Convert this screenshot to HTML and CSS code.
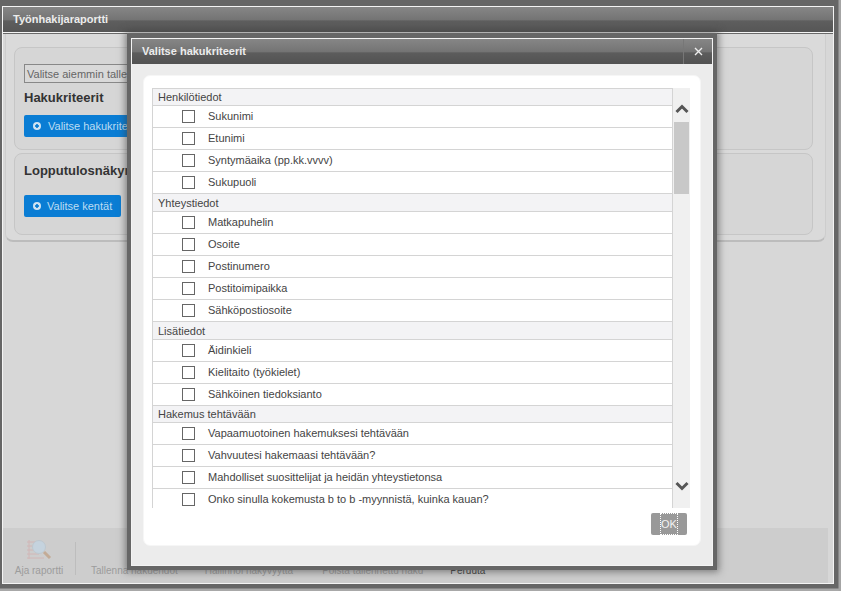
FILE: index.html
```html
<!DOCTYPE html>
<html lang="fi">
<head>
    <meta charset="UTF-8">
    <meta name="viewport" content="width=device-width, initial-scale=1.0">
    <title>Työnhakijaraportti</title>
    <link rel="stylesheet" href="styles.css">
</head>
<body>

<div class="window">
    <div class="title-bar">Työnhakijaraportti</div>
    <div class="page">
        <div class="panel">
            <div class="box box-criteria">
                <div class="saved-search">Valitse aiemmin tallennettu haku</div>
                <h3>Hakukriteerit</h3>
                <button type="button" class="blue-btn blue-btn-wide"><span class="plus-dot"></span>Valitse hakukriteerit</button>
            </div>
            <div class="box box-result">
                <h3>Lopputulosnäkymä</h3>
                <button type="button" class="blue-btn"><span class="plus-dot"></span>Valitse kentät</button>
            </div>
        </div>
    </div>
    <div class="toolbar">
        <div class="tool tool-run">
            <svg class="tool-icon" width="26" height="22" viewBox="0 0 26 22">
                <path d="M1 3h14M1 7h11M1 11h10M1 15h12M1 19h17M3 1v19" stroke="#d3b0b0" stroke-width="1" fill="none"/>
                <circle cx="13" cy="8" r="6.5" fill="#c3d6e4" stroke="#b9c6d0"/>
                <path d="M18 13l6 6" stroke="#c0a084" stroke-width="3"/>
            </svg>
            <span>Aja raportti</span>
        </div>
        <div class="tool-sep"></div>
        <span class="tool-link tool-save">Tallenna hakuehdot</span>
        <span class="tool-link tool-edit">Hallinnoi näkyvyyttä</span>
        <span class="tool-link tool-del">Poista tallennettu haku</span>
        <span class="tool-link tool-cancel">Peruuta</span>
    </div>
</div>

<div class="modal">
    <div class="modal-head">
        <span class="modal-title">Valitse hakukriteerit</span>
        <span class="modal-close">
            <svg width="9" height="9" viewBox="0 0 9 9"><path d="M1 1l7 7M8 1l-7 7" stroke="#eee" stroke-width="1.4"/></svg>
        </span>
    </div>
    <div class="modal-body">
        <div class="card">
            <div class="list-wrap">
                <div class="list">
                    <div class="group">Henkilötiedot</div>
                    <label class="row"><span class="check"></span>Sukunimi</label>
                    <label class="row"><span class="check"></span>Etunimi</label>
                    <label class="row"><span class="check"></span>Syntymäaika (pp.kk.vvvv)</label>
                    <label class="row"><span class="check"></span>Sukupuoli</label>
                    <div class="group group-tall">Yhteystiedot</div>
                    <label class="row"><span class="check"></span>Matkapuhelin</label>
                    <label class="row"><span class="check"></span>Osoite</label>
                    <label class="row"><span class="check"></span>Postinumero</label>
                    <label class="row"><span class="check"></span>Postitoimipaikka</label>
                    <label class="row"><span class="check"></span>Sähköpostiosoite</label>
                    <div class="group group-tall">Lisätiedot</div>
                    <label class="row"><span class="check"></span>Äidinkieli</label>
                    <label class="row"><span class="check"></span>Kielitaito (työkielet)</label>
                    <label class="row"><span class="check"></span>Sähköinen tiedoksianto</label>
                    <div class="group">Hakemus tehtävään</div>
                    <label class="row"><span class="check"></span>Vapaamuotoinen hakemuksesi tehtävään</label>
                    <label class="row"><span class="check"></span>Vahvuutesi hakemaasi tehtävään?</label>
                    <label class="row"><span class="check"></span>Mahdolliset suosittelijat ja heidän yhteystietonsa</label>
                    <label class="row row-last"><span class="check"></span>Onko sinulla kokemusta b to b -myynnistä, kuinka kauan?</label>
                </div>
                <div class="scrollbar">
                    <svg class="arrow" width="16" height="10" viewBox="0 0 16 10"><path d="M2.5 8L8 2.5 13.5 8" stroke="#555" stroke-width="3" fill="none"/></svg>
                    <div class="thumb"></div>
                    <div class="track"></div>
                    <svg class="arrow" width="16" height="10" viewBox="0 0 16 10"><path d="M2.5 2L8 7.5 13.5 2" stroke="#555" stroke-width="3" fill="none"/></svg>
                </div>
            </div>
            <div class="card-foot">
                <button type="button" class="ok-btn"><span class="ok-text">OK</span></button>
            </div>
        </div>
    </div>
</div>

</body>
</html>
```

FILE: styles.css
```css
html, body {
    margin: 0;
    height: 591px;
    overflow: hidden;
}
body {
    position: relative;
    font-family: "Liberation Sans", Arial, sans-serif;
    background: linear-gradient(to right, transparent 838px, #a4a4a4 839px), linear-gradient(#666 0, #666 588px, #a8a8a8 589px);
    box-sizing: border-box;
    padding: 6px 7px 0 2px;
}
.window {
    height: 578px;
    box-sizing: border-box;
    border: 1px solid #f4f4f4;
    background: #d7d7d7;
    display: flex;
    flex-direction: column;
}
.title-bar {
    height: 25px;
    line-height: 24px;
    padding-left: 10px;
    font-size: 11px;
    font-weight: bold;
    color: #ececec;
    background: linear-gradient(#868686, #747474 50%, #5e5e5e 56%, #565656);
    border-bottom: 1px solid #f4f4f4;
    flex: none;
}
.page {
    flex: 1;
    border-top: 1px solid #6a6a6a;
}
.panel {
    height: 208px;
    box-sizing: border-box;
    margin: 0 7px 0 2px;
    padding: 13px 12px 0 8px;
    background: #dadada;
    border: 1px solid #cdcdcd;
    border-top: 0;
    border-bottom: 2px solid #bcbcbc;
    border-radius: 0 0 8px 8px;
}
.box {
    border: 1px solid #c6c6c6;
    border-radius: 8px;
    background: #d6d6d6;
    padding: 0 9px;
    box-sizing: border-box;
}
.box-criteria {
    height: 103px;
    padding-top: 16px;
    margin-bottom: 3px;
}
.box-result {
    height: 82px;
    padding-top: 9px;
}
.saved-search {
    width: 300px;
    height: 19px;
    line-height: 18px;
    box-sizing: border-box;
    border: 1px solid #888;
    padding-left: 2px;
    font-size: 11px;
    color: #666;
    background: #d9d9d9;
}
.box h3 {
    margin: 0;
    font-size: 13px;
    line-height: 16px;
    color: #333;
}
.box-criteria h3 {
    margin: 7px 0 9px;
}
.box-result h3 {
    margin-bottom: 16px;
}
.blue-btn {
    display: flex;
    align-items: center;
    height: 22px;
    width: 97px;
    padding: 0 0 0 9px;
    border: 0;
    border-radius: 2px;
    background: #0a7dd4;
    color: #bcdcf2;
    font-family: inherit;
    font-size: 11px;
    white-space: nowrap;
}
.blue-btn-wide {
    width: 180px;
}
.plus-dot {
    width: 8px;
    height: 8px;
    margin-right: 6px;
    border-radius: 50%;
    background: radial-gradient(#0a7dd4 1.5px, #cfe3f2 2px);
    flex: none;
}
.blue-btn-wide .plus-dot {
    margin-right: 7px;
}
.toolbar {
    height: 55px;
    flex: none;
    background: #cdcdcd;
    margin: 0 5px 0 0;
    display: flex;
    align-items: flex-start;
    font-size: 10px;
    color: #9c9c9c;
    position: relative;
}
.tool {
    width: 72px;
    text-align: center;
    display: flex;
    flex-direction: column;
    align-items: center;
}
.tool-icon {
    margin-top: 11px;
    margin-bottom: 4px;
    opacity: 0.75;
}
.tool-sep {
    width: 1px;
    height: 33px;
    margin-top: 14px;
    background: #bdbdbd;
}
.tool-link {
    margin-top: 36px;
    white-space: nowrap;
    line-height: 13px;
}
.tool-save { margin-left: 15px; }
.tool-edit { margin-left: 27px; }
.tool-del { margin-left: 29px; }
.tool-cancel { margin-left: 27px; color: #444; }

/* dialog on top of the page */
.modal {
    position: absolute;
    left: 127px;
    top: 33px;
    width: 590px;
    height: 537px;
    box-sizing: border-box;
    border: 4px solid #666;
    border-top-width: 5px;
    box-shadow: 0 0 7px 2px rgba(60, 60, 60, 0.55);
    background: #ececec;
    display: flex;
    flex-direction: column;
}
.modal-head {
    height: 26px;
    box-sizing: border-box;
    border: 1px solid #f4f4f4;
    border-bottom: 0;
    background: linear-gradient(#868686, #747474 50%, #5c5c5c 56%, #525252);
    display: flex;
    flex: none;
}
.modal-title {
    flex: 1;
    padding-left: 10px;
    line-height: 24px;
    font-size: 11px;
    font-weight: bold;
    color: #ececec;
}
.modal-close {
    width: 28px;
    border-left: 1px solid #777;
    display: flex;
    align-items: center;
    justify-content: center;
}
.modal-body {
    flex: 1;
    min-height: 0;
    padding: 11px 11px 19px 11px;
    border-left: 1px solid #f4f4f4;
    border-right: 1px solid #f4f4f4;
    border-bottom: 1px solid #f4f4f4;
}
.card {
    height: 100%;
    box-sizing: border-box;
    background: #fff;
    border: 1px solid #f6f6f6;
    border-radius: 7px;
    padding: 12px 10px 0 8px;
}
.list-wrap {
    display: flex;
    height: 420px;
}
.list {
    width: 521px;
    height: 420px;
    box-sizing: border-box;
    border-left: 1px solid #d4d4d4;
    border-right: 1px solid #d4d4d4;
    border-top: 1px solid #d4d4d4;
    overflow: hidden;
}
.group {
    height: 16px;
    line-height: 16px;
    padding-left: 5px;
    font-size: 11px;
    color: #444;
    background: #f3f3f5;
    border-bottom: 1px solid #d4d4d4;
}
.group-tall {
    height: 17px;
    line-height: 18px;
}
.row {
    display: flex;
    align-items: center;
    height: 21px;
    font-size: 11px;
    line-height: 19px;
    color: #444;
    border-bottom: 1px solid #d4d4d4;
}
.row-last {
    border-bottom: 0;
}
.check {
    width: 13px;
    height: 13px;
    box-sizing: border-box;
    margin: 0 13px 0 29px;
    border: 1px solid #666;
    background: #fff;
    flex: none;
}
.scrollbar {
    width: 17px;
    background: #f0f0f0;
    display: flex;
    flex-direction: column;
    align-items: center;
}
.arrow {
    flex: none;
    margin-top: 16px;
}
.scrollbar .arrow:last-child {
    margin-top: 0;
    margin-bottom: 17px;
}
.thumb {
    width: 15px;
    height: 72px;
    margin-top: 8px;
    background: #c8c8c8;
    flex: none;
}
.track {
    flex: 1;
}
.card-foot {
    display: flex;
    justify-content: flex-end;
    padding: 5px 3px 0 0;
}
.ok-btn {
    width: 36px;
    height: 22px;
    padding: 0;
    border: 0;
    border-radius: 2px;
    background: #999;
    color: #f2f2f2;
    font-family: inherit;
    font-size: 11px;
    display: flex;
    align-items: center;
    justify-content: center;
}
.ok-text {
    outline: 1px dotted #fff;
    line-height: 20px;
    width: 16px;
}
```
